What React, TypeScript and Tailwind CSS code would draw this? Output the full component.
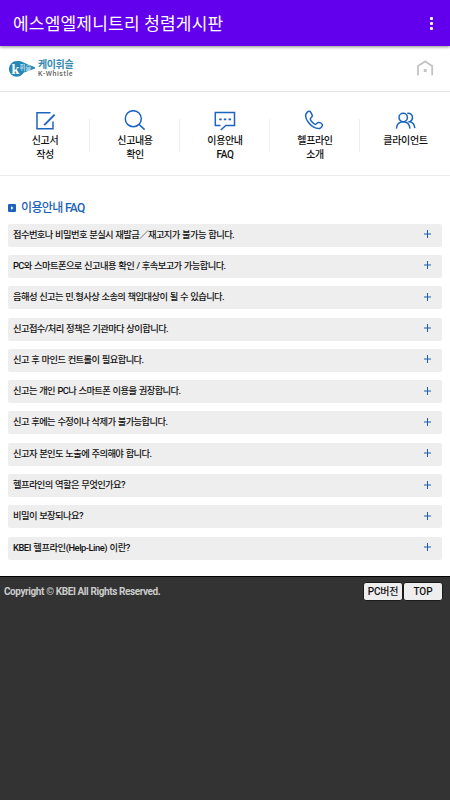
const faqs = [
  "접수번호나 비밀번호 분실시 재발금／재고지가 불가능 합니다.",
  "PC와 스마트폰으로 신고내용 확인 / 후속보고가 가능합니다.",
  "음해성 신고는 민.형사상 소송의 책임대상이 될 수 있습니다.",
  "신고접수/처리 정책은 기관마다 상이합니다.",
  "신고 후 마인드 컨트롤이 필요합니다.",
  "신고는 개인 PC나 스마트폰 이용을 권장합니다.",
  "신고 후에는 수정이나 삭제가 불가능합니다.",
  "신고자 본인도 노출에 주의해야 합니다.",
  "헬프라인의 역할은 무엇인가요?",
  "비밀이 보장되나요?",
  "KBEI 헬프라인(Help-Line) 이란?",
];

const menus = [
  {
    lines: ["신고서", "작성"],
    icon: (
      <>
        <path d="M16.5 2.7H3V18.7H19V11.5" />
        <path d="M10.2 15.2L20.6 4.6" strokeWidth="1.9" />
      </>
    ),
  },
  {
    lines: ["신고내용", "확인"],
    icon: (
      <>
        <circle cx="9.3" cy="8.7" r="8" />
        <path d="M15 14.4L20.6 19.6" />
      </>
    ),
  },
  {
    lines: ["이용안내", "FAQ"],
    icon: (
      <>
        <path d="M6.5 15.5H1.3V2.5H20.5V15.5H11.8L6.8 20" />
        <path d="M5.2 9.3H7.7M9.8 9.3H12.3M14.5 9.3H17" strokeWidth="1.8" />
      </>
    ),
  },
  {
    lines: ["헬프라인", "소개"],
    icon: (
      <path d="M3.3 2.1C4.5 1 6 1 6.8 2.3L8.1 4.9C8.7 6.2 7.9 7.1 6.8 8C5.8 8.9 6.3 9.9 7.4 11.3C8.6 12.7 10 14 11.2 14.4C12.4 14.7 12.8 12.9 14.2 12.5C15.4 12.1 17.8 13.4 18.3 14.5C18.8 15.9 17.1 18 15.5 18.4C12 19.2 7.3 16.2 4.5 12.5C1.6 8.7 .5 4.7 3.3 2.1Z" />
    ),
  },
  {
    lines: ["클라이언트"],
    icon: (
      <>
        <circle cx="8.2" cy="7.5" r="4.2" />
        <path d="M1.4 18.6C1.7 14.3 4.4 11.7 8.2 11.7C12 11.7 14.6 14.3 15 18.6" />
        <path d="M12.2 3.5C15.2 2.8 17.5 4.6 17.5 7.5C17.5 9.6 16.4 11 14.5 11.8C17.7 12.3 19.6 14.6 19.8 18.1" />
      </>
    ),
  },
];

const Logo = () => (
  <div className="flex items-center">
    <svg width="28" height="18" viewBox="0 0 28 18">
      <circle cx="8.7" cy="8.9" r="7.8" fill="#2688b5" />
      <path d="M9 1.1C12 .9 14 1.6 16 2.7L27 7.2V8.6L16 12.4L12 15Z" fill="#2688b5" />
      <text x="3.5" y="14" fontSize="14" fontWeight="700" fill="#fff" fontFamily="Liberation Serif, serif">k</text>
      <text x="11.4" y="9.8" fontSize="6.5" fill="#e3f2f9" fontFamily="Noto Sans CJK KR, sans-serif">휘슬</text>
    </svg>
    <div className="ml-[2px]">
      <p className="text-[10px] leading-[11px] font-bold tracking-[-0.4px] text-[#3287b1] whitespace-nowrap">케이휘슬</p>
      <p className="text-[7px] leading-[8px] font-medium tracking-[0.6px] text-[#666] whitespace-nowrap">K-Whistle</p>
    </div>
  </div>
);

const App = () => {
  return (
    <div className="w-[450px] h-[800px] overflow-hidden flex flex-col bg-white text-[#111] font-['Roboto','Noto_Sans_CJK_KR',sans-serif]">
      <header className="relative h-[46px] shrink-0 flex items-center justify-between pl-[13px] pr-[17px] bg-[#6200ee] shadow-[0_1px_3px_rgba(0,0,0,0.45)]">
        <h1 className="pt-[1px] text-[17px] leading-[24px] tracking-[0.2px] text-white whitespace-nowrap">에스엠엘제니트리 청렴게시판</h1>
        <div className="flex flex-col gap-[2px]">
          <i className="size-[3px] rounded-[1px] bg-white" />
          <i className="size-[3px] rounded-[1px] bg-white" />
          <i className="size-[3px] rounded-[1px] bg-white" />
        </div>
      </header>

      <div className="h-[46px] shrink-0 flex items-center justify-between pl-2 pr-[16px] border-b border-[#e5e5e5]">
        <Logo />
        <svg className="mb-[2px]" width="18" height="16" viewBox="0 0 18 16" fill="none" stroke="#c4c4c4" strokeWidth="1.8">
          <path d="M2 15.3V6L9.2 1.4L16.2 6V15.3" />
          <path d="M7.7 10.5H10.7" strokeWidth="3" />
        </svg>
      </div>

      <nav className="h-[84px] shrink-0 grid grid-cols-5 pt-[18px] border-b border-[#ebebeb]">
        {menus.map((menu, i) => (
          <div key={menu.lines[0]} className="flex">
            <div className="flex-1 flex flex-col items-center pl-[1px]">
              <svg width="22" height="22" viewBox="0 0 22 22" fill="none" stroke="#1b65c0" strokeWidth="1.5">
                {menu.icon}
              </svg>
              <p className="mt-[1.5px] text-[10px] leading-[14.5px] font-medium tracking-[-0.35px] text-center whitespace-nowrap">
                {menu.lines.map((line) => (
                  <span key={line} className="block">{line}</span>
                ))}
              </p>
            </div>
            {i < 4 && <span className="w-px h-[33px] mt-[9px] bg-[#efefef]" />}
          </div>
        ))}
      </nav>

      <main className="h-[400px] shrink-0 px-2 pt-[22px]">
        <h2 className="flex items-center h-[20px] text-[12px] font-medium tracking-[-0.65px] text-[#1b62b8]">
          <svg className="mr-[5px]" width="8" height="8" viewBox="0 0 8 8">
            <rect width="8" height="8" rx="1.2" fill="#1b62b8" />
            <path d="M3 2.2L5.6 4L3 5.8Z" fill="#fff" />
          </svg>
          이용안내 FAQ
        </h2>
        <ul className="mt-[5.7px] flex flex-col gap-[8.3px]">
          {faqs.map((faq) => (
            <li key={faq} className="group h-[23px] flex items-center justify-between pl-[5px] pr-[11px] rounded-[2px] bg-[#eee]">
              <span className="text-[9.3px] leading-[20px] pb-[1px] font-medium tracking-[-0.6px] [word-spacing:0.6px] group-last:tracking-[-0.45px] whitespace-nowrap">{faq}</span>
              <svg className="mb-[2px]" width="7" height="8" viewBox="0 0 7 8" stroke="#1b5db0">
                <path d="M0 4H7M3.5 0V8" />
              </svg>
            </li>
          ))}
        </ul>
      </main>

      <footer className="flex-1 flex items-start justify-between pl-1 pr-[7px] pt-[5px] bg-[#333] border-t border-black">
        <p className="pt-[3px] text-[10px] leading-[14px] font-bold tracking-[-0.42px] [word-spacing:0.1px] text-[#ccc]">
          Copyright © KBEI All Rights Reserved.
        </p>
        <div className="flex text-[10px] leading-[17px] font-medium text-center">
          <button className="w-[40px] h-[19px] rounded-[3px] border border-[#1a1a1a] bg-[#eee] tracking-[-0.2px] whitespace-nowrap">PC버전</button>
          <button className="w-[40px] h-[19px] rounded-[3px] border border-[#1a1a1a] bg-[#eee]">TOP</button>
        </div>
      </footer>
    </div>
  );
};

export default App;
